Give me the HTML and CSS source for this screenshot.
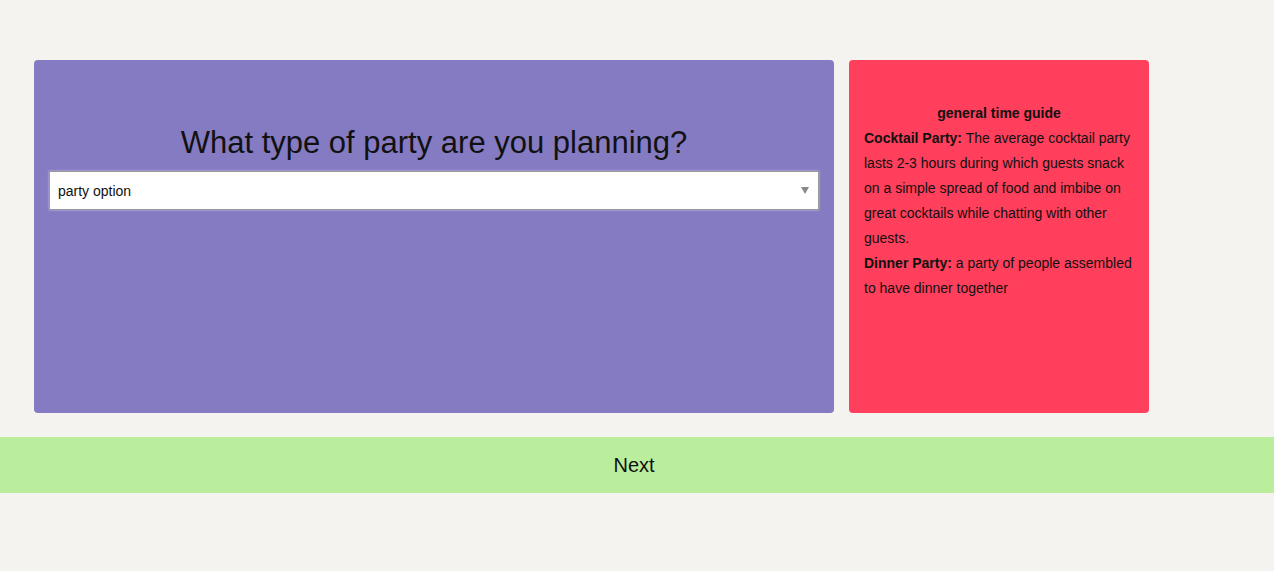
FILE: index.html
```html
<!DOCTYPE html>
<html>
<head>
<meta charset="utf-8">
<link rel="stylesheet" href="styles.css">
</head>
<body>
<main class="page">
  <div class="row">
    <section class="question-card">
      <h1 class="question">What type of party are you planning?</h1>
      <div class="select">
        <span class="select-text">party option</span>
        <span class="select-arrow"></span>
      </div>
    </section>
    <aside class="guide-card">
      <div class="guide-title">general time guide</div>
      <p class="guide-text"><b>Cocktail Party:</b> The average cocktail party lasts 2-3 hours during which guests snack on a simple spread of food and imbibe on great cocktails while chatting with other guests.</p>
      <p class="guide-text"><b>Dinner Party:</b> a party of people assembled to have dinner together</p>
    </aside>
  </div>
  <div class="next-bar">Next</div>
</main>
</body>
</html>
```

FILE: styles.css
```css
html, body {
  margin: 0;
  padding: 0;
}
body {
  background: #f4f3ef;
  font-family: "Liberation Sans", Arial, sans-serif;
  color: #111;
  height: 571px;
}
.page {
  padding-top: 60px;
}
.row {
  display: flex;
  gap: 15px;
  padding-left: 34px;
}
.question-card {
  box-sizing: border-box;
  width: 800px;
  height: 353px;
  background: #857bc2;
  border-radius: 4px;
  padding: 64px 15px 0;
}
.question {
  margin: 0 0 10px;
  font-weight: normal;
  font-size: 31px;
  line-height: 37px;
  text-align: center;
  color: #111;
}
.select {
  box-sizing: border-box;
  height: 39px;
  background: #fff;
  border: 1px solid #9a9a9a;
  box-shadow: 0 0 2px rgba(255,255,255,0.6);
  display: flex;
  align-items: center;
  justify-content: space-between;
  padding: 0 8px 0 8px;
}
.select-text {
  font-size: 14px;
  color: #111;
}
.select-arrow {
  width: 0;
  height: 0;
  border-left: 4px solid transparent;
  border-right: 4px solid transparent;
  border-top: 7px solid #888;
  margin-right: 1px;
}
.guide-card {
  box-sizing: border-box;
  width: 300px;
  height: 353px;
  background: #ff3f5b;
  border-radius: 4px;
  padding: 41px 15px 0;
  font-size: 14px;
  line-height: 25px;
}
.guide-title {
  font-weight: bold;
  font-size: 14px;
  text-align: center;
}
.guide-text {
  margin: 0;
}
.guide-text b {
  font-weight: bold;
}
.next-bar {
  margin-top: 24px;
  height: 56px;
  background: #baee9d;
  display: flex;
  align-items: center;
  justify-content: center;
  font-size: 20px;
  color: #111;
  padding-right: 6px;
}
```
